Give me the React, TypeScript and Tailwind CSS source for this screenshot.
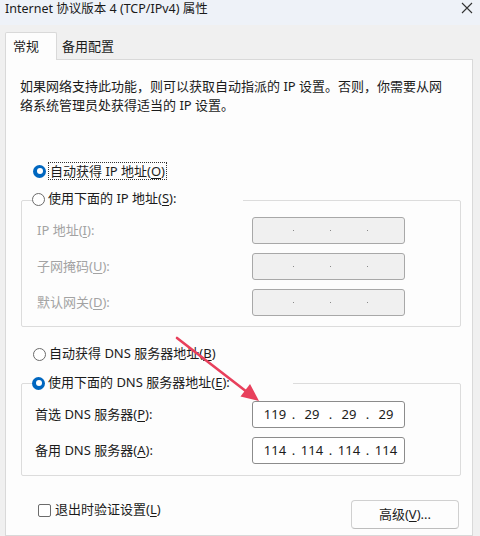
import React from "react";

const U = ({ c }: { c: string }) => <span className="underline underline-offset-[2px]">{c}</span>;

function Radio({ checked }: { checked?: boolean }) {
  return checked ? (
    <span className="w-[13px] h-[13px] rounded-full bg-[#0067c0] flex items-center justify-center shrink-0">
      <span className="w-[6px] h-[6px] rounded-full bg-white" />
    </span>
  ) : (
    <span className="w-[13px] h-[13px] rounded-full border border-[#6b6b6b] bg-white shrink-0" />
  );
}

function IpBox({ values, disabled }: { values?: string[]; disabled?: boolean }) {
  const v = values ?? ["", "", "", ""];
  return (
    <div
      className={
        disabled
          ? "w-[153px] h-[27px] border border-[#a8a8a8] rounded-[3px] bg-[#f0f0f0] flex items-center pl-[4px] text-[#8a8a8a]"
          : "w-[153px] h-[27px] border border-[#8c8c8c] rounded-[3px] bg-white flex items-center pl-[4px] text-[#1b1b1b] text-[13px]"
      }
    >
      {v.map((x, i) => (
        <React.Fragment key={i}>
          <span className="w-[36px] text-center">{x}</span>
          {i < 3 && (
            <span className="w-[1px] flex justify-center">
              {disabled ? <span className="w-[1px] h-[1px] shrink-0 bg-[#8a8a8a]" /> : <span>.</span>}
            </span>
          )}
        </React.Fragment>
      ))}
    </div>
  );
}

export default function App() {
  return (
    <div className="relative w-[480px] h-[536px] overflow-hidden bg-[#f0f0f0] text-[#1b1b1b] text-[13px] font-['Noto_Sans','Noto_Sans_CJK_SC',sans-serif] flex flex-col">
      {/* title bar */}
      <div className="h-[25px] bg-[#eef2f8] flex items-start justify-between shrink-0">
        <span className="pl-[5px] pt-[1px] text-[12.5px] leading-[15px] text-[#1a1a1a]">Internet 协议版本 4 (TCP/IPv4) 属性</span>
        <svg width="12" height="12" viewBox="0 0 12 12" className="mt-[2px] mr-[7px]">
          <path d="M1 1 L11 11 M11 1 L1 11" stroke="#333" strokeWidth="1.1" />
        </svg>
      </div>

      {/* tabs */}
      <div className="flex items-end pl-[5px] mt-[7px] shrink-0">
        <div className="relative z-10 -mb-px w-[52px] h-[28px] bg-[#fdfdfd] border border-[#d9d9d9] border-b-0 rounded-t-[2px] flex items-center pl-[7px]">
          常规
        </div>
        <div className="h-[24px] flex items-center pl-[5px] pr-[8px]">备用配置</div>
      </div>

      {/* panel */}
      <div className="ml-[5px] w-[468px] flex-1 bg-[#fdfdfd] border border-[#d9d9d9] flex flex-col">
        <p className="ml-[14px] mt-[17px] leading-[19px] whitespace-nowrap">
          如果网络支持此功能，则可以获取自动指派的 IP 设置。否则，你需要从网
          <br />
          络系统管理员处获得适当的 IP 设置。
        </p>

        {/* radio 1 */}
        <div className="ml-[27px] mt-[46px] h-[20px] flex items-center gap-[2px]">
          <Radio checked />
          <span className="border border-dotted border-[#333] px-[1px] leading-[16px]">
            自动获得 IP 地址(<U c="O" />)
          </span>
        </div>

        {/* group 1 */}
        <div className="ml-[15px] mt-[19px] w-[440px] border border-[#dcdcdc] rounded-[2px] pb-[10px] flex flex-col">
          <div className="-mt-[12px] ml-[10px] w-[211px] h-[20px] bg-[#fdfdfd] flex items-center gap-[3px]">
            <Radio />
            <span>
              使用下面的 IP 地址(<U c="S" />):
            </span>
          </div>
          <div className="mt-[8px] flex items-center pl-[15px] text-[#a3a3a3]">
            <span className="w-[215px]">
              IP 地址(<U c="I" />):
            </span>
            <IpBox disabled />
          </div>
          <div className="mt-[9px] flex items-center pl-[15px] text-[#a3a3a3]">
            <span className="w-[215px]">
              子网掩码(<U c="U" />):
            </span>
            <IpBox disabled />
          </div>
          <div className="mt-[9px] flex items-center pl-[15px] text-[#a3a3a3]">
            <span className="w-[215px]">
              默认网关(<U c="D" />):
            </span>
            <IpBox disabled />
          </div>
        </div>

        {/* radio DNS auto */}
        <div className="ml-[27px] mt-[17px] h-[20px] flex items-center gap-[3px]">
          <Radio />
          <span>
            自动获得 DNS 服务器地址(<U c="B" />)
          </span>
        </div>

        {/* group 2 */}
        <div className="ml-[15px] mt-[19px] w-[440px] border border-[#dcdcdc] rounded-[2px] pb-[11px] flex flex-col">
          <div className="-mt-[11px] ml-[10px] w-[261px] h-[20px] bg-[#fdfdfd] flex items-center gap-[3px]">
            <Radio checked />
            <span>
              使用下面的 DNS 服务器地址(<U c="E" />):
            </span>
          </div>
          <div className="mt-[8px] flex items-center pl-[13px]">
            <span className="w-[217px]">
              首选 DNS 服务器(<U c="P" />):
            </span>
            <IpBox values={["119", "29", "29", "29"]} />
          </div>
          <div className="mt-[9px] flex items-center pl-[13px]">
            <span className="w-[217px]">
              备用 DNS 服务器(<U c="A" />):
            </span>
            <IpBox values={["114", "114", "114", "114"]} />
          </div>
        </div>

        {/* bottom row */}
        <div className="mt-[24px] pl-[32px] pr-[13px] flex items-start justify-between">
          <div className="h-[20px] flex items-center gap-[4px]">
            <span className="w-[13px] h-[13px] border border-[#6b6b6b] rounded-[2px] bg-white" />
            <span>
              退出时验证设置(<U c="L" />)
            </span>
          </div>
          <div className="w-[108px] h-[29px] bg-[#fdfdfd] border border-[#d0d0d0] border-b-[#bdbdbd] rounded-[4px] flex items-center justify-center">
            高级(<U c="V" />)...
          </div>
        </div>
      </div>

      {/* red annotation arrow */}
      <svg className="absolute left-0 top-0 pointer-events-none" width="480" height="536" viewBox="0 0 480 536">
        <path d="M177 338 L247 392" stroke="#e8405c" strokeWidth="2.6" strokeLinecap="round" />
        <polygon points="259,401 240.5,396.5 250,384" fill="#e8405c" />
      </svg>
    </div>
  );
}
